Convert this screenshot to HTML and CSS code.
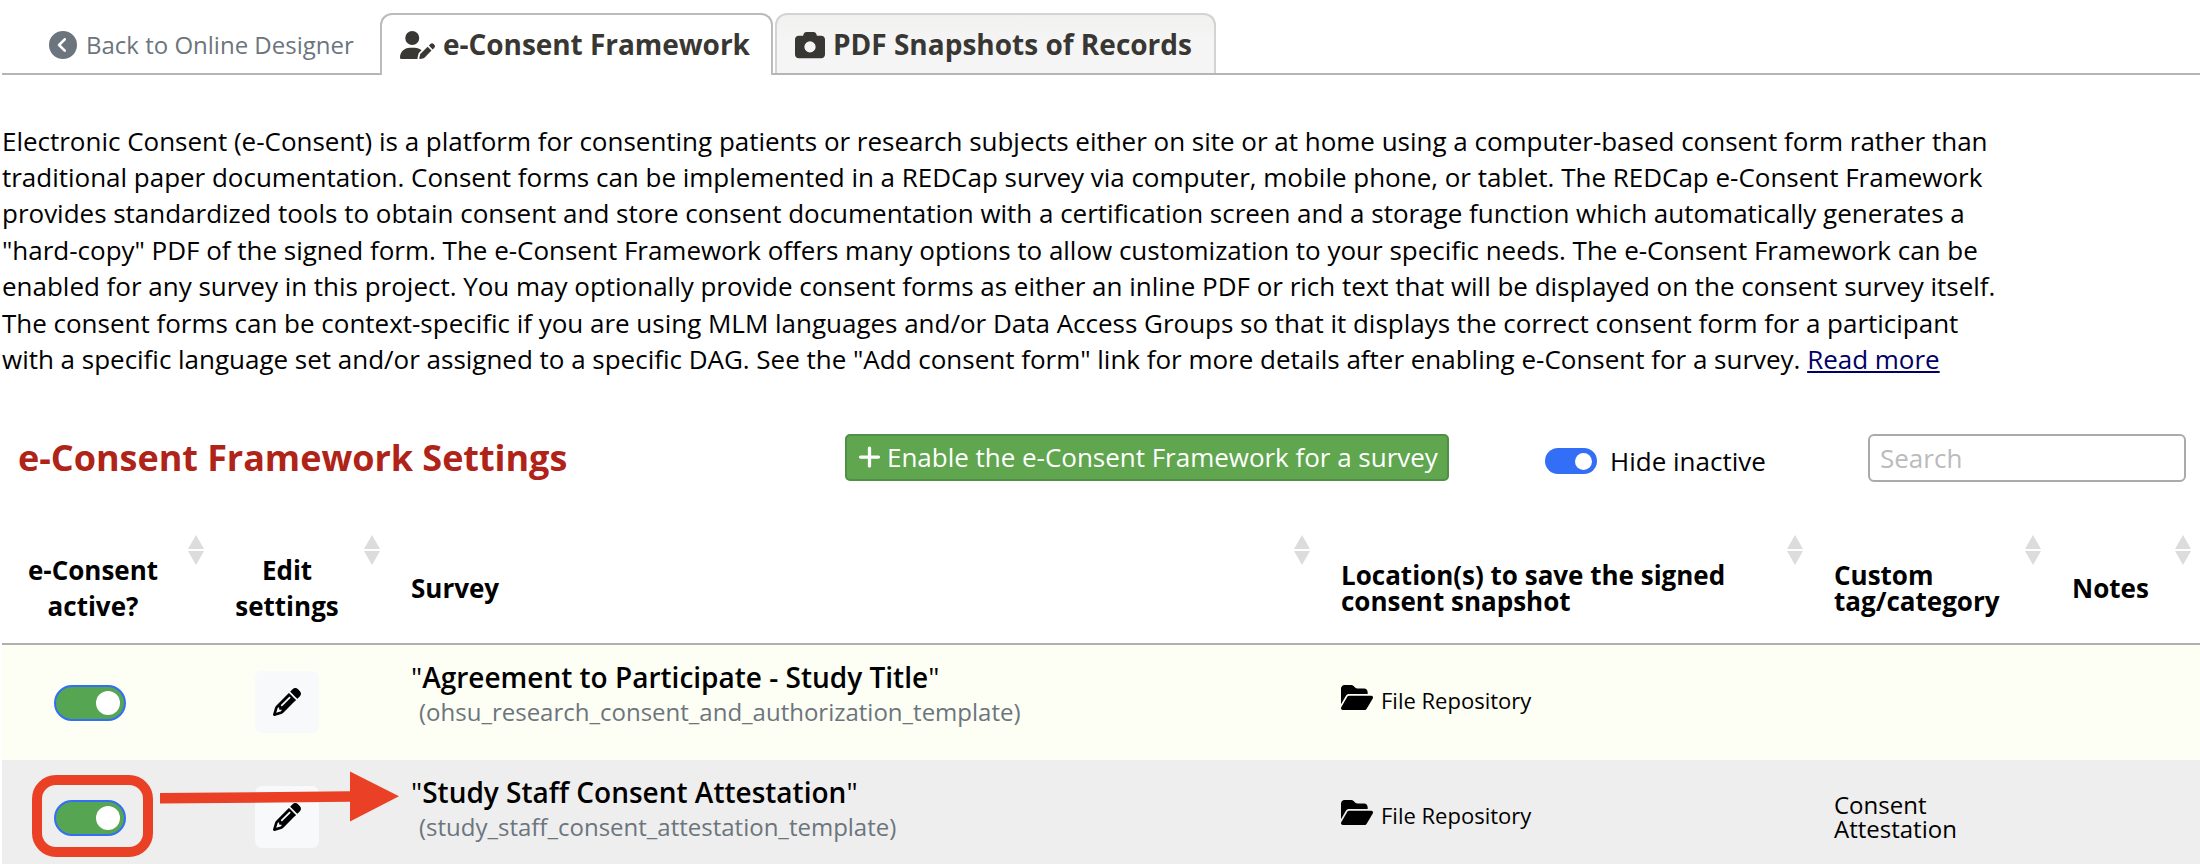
FILE: index.html
```html
<!DOCTYPE html>
<html lang="en">

<head>
    <meta charset="UTF-8">
    <meta name="viewport" content="width=device-width, initial-scale=1.0">
    <title>e-Consent Framework</title>
    <link rel="stylesheet" href="styles.css">
</head>

<body>
    <svg class="symbols">
        <symbol id="chevron" viewBox="0 0 512 512"><path d="M512 256A256 256 0 1 0 0 256a256 256 0 1 0 512 0zM271 135c9.4-9.4 24.6-9.4 33.9 0s9.4 24.6 0 33.9l-87 87 87 87c9.4 9.4 9.4 24.6 0 33.9s-24.6 9.4-33.9 0L167 273c-9.4-9.4-9.4-24.6 0-33.9L271 135z"/></symbol>
        <symbol id="user-pen" viewBox="0 0 640 512"><path d="M224 256A128 128 0 1 0 224 0a128 128 0 1 0 0 256zm-45.7 48C79.8 304 0 383.8 0 482.3C0 498.7 13.3 512 29.7 512H322.8c-3.1-8.8-3.7-18.4-1.4-27.8l15-60.1c2.8-11.3 8.6-21.5 16.8-29.7l40.3-40.3c-32.1-31-75.7-50.1-123.9-50.1H178.3zm435.5-68.3c-15.6-15.6-40.9-15.6-56.6 0l-29.4 29.4 71 71 29.4-29.4c15.6-15.6 15.6-40.9 0-56.6l-14.4-14.4zM375.9 417c-4.1 4.1-7 9.2-8.4 14.9l-15 60.1c-1.4 5.5 .2 11.2 4.2 15.2s9.7 5.6 15.2 4.2l60.1-15c5.6-1.4 10.8-4.3 14.9-8.4L576.1 358.7l-71-71L375.9 417z"/></symbol>
        <symbol id="camera" viewBox="0 0 512 512"><path d="M149.1 64.8L138.7 96H64C28.7 96 0 124.7 0 160V416c0 35.3 28.7 64 64 64H448c35.3 0 64-28.7 64-64V160c0-35.3-28.7-64-64-64H373.3L362.9 64.8C356.4 45.2 338.1 32 317.4 32H194.6c-20.7 0-39 13.2-45.5 32.8zM256 192a96 96 0 1 1 0 192 96 96 0 1 1 0-192z"/></symbol>
        <symbol id="plus" viewBox="0 0 448 512"><path d="M256 80c0-17.7-14.3-32-32-32s-32 14.3-32 32V224H48c-17.7 0-32 14.3-32 32s14.3 32 32 32H192V432c0 17.7 14.3 32 32 32s32-14.3 32-32V288H400c17.7 0 32-14.3 32-32s-14.3-32-32-32H256V80z"/></symbol>
        <symbol id="folder" viewBox="0 0 576 512"><path d="M88.7 223.8L0 375.8V96C0 60.7 28.7 32 64 32H181.5c17 0 33.3 6.7 45.3 18.7l26.5 26.5c12 12 28.3 18.7 45.3 18.7H416c35.3 0 64 28.7 64 64v32H144c-22.8 0-43.8 12.1-55.3 31.8zm27.6 16.1C122.1 230 132.6 224 144 224H544c11.5 0 22 6.1 27.7 16.1s5.7 22.2-.1 32.1l-112 192C453.9 474 443.4 480 432 480H32c-11.5 0-22-6.1-27.7-16.1s-5.7-22.2 .1-32.1l112-192z"/></symbol>
        <symbol id="pencil" viewBox="0 0 512 512"><path d="M410.3 231l11.3-11.3-33.9-33.9-62.1-62.1L291.7 89.8l-11.3 11.3-22.6 22.6L58.6 322.9c-10.4 10.4-18 23.3-22.2 37.4L1 480.7c-2.5 8.4-.2 17.5 6.1 23.7s15.3 8.5 23.7 6.1l120.3-35.4c14.1-4.2 27-11.8 37.4-22.2L387.7 253.7 410.3 231zM160 399.4l-9.1 22.7c-4 3.1-8.5 5.4-13.3 6.9L59.4 452l23-78.1c1.4-4.9 3.8-9.4 6.9-13.3l22.7-9.1v32c0 8.8 7.2 16 16 16h32zM362.7 18.7L348.3 33.2 325.7 55.8 314.3 67.1l33.9 33.9 62.1 62.1 33.9 33.9 11.3-11.3 22.6-22.6 14.5-14.5c25-25 25-65.5 0-90.5L453.3 18.7c-25-25-65.5-25-90.5 0zm-47.4 168l-144 144c-6.2 6.2-16.4 6.2-22.6 0s-6.2-16.4 0-22.6l144-144c6.2-6.2 16.4-6.2 22.6 0s6.2 16.4 0 22.6z"/></symbol>
        <symbol id="sort" viewBox="0 0 16 30"><path d="M8 0L16 14H0zM0 16H16L8 30z"/></symbol>
    </svg>

    <div class="tabs">
        <a class="back"><svg class="icon-back"><use href="#chevron"/></svg>Back to Online Designer</a>
        <a class="tab active"><svg class="icon-user"><use href="#user-pen"/></svg>e-Consent Framework</a>
        <a class="tab"><svg class="icon-camera"><use href="#camera"/></svg>PDF Snapshots of Records</a>
    </div>

    <p class="intro">Electronic Consent (e-Consent) is a platform for consenting patients or research subjects either on site or at home using a computer-based consent form rather than traditional paper documentation. Consent forms can be implemented in a REDCap survey via computer, mobile phone, or tablet. The REDCap e-Consent Framework provides standardized tools to obtain consent and store consent documentation with a certification screen and a storage function which automatically generates a "hard-copy" PDF of the signed form. The e-Consent Framework offers many options to allow customization to your specific needs. The e-Consent Framework can be enabled for any survey in this project. You may optionally provide consent forms as either an inline PDF or rich text that will be displayed on the consent survey itself. The consent forms can be context-specific if you are using MLM languages and/or Data Access Groups so that it displays the correct consent form for a participant with a specific language set and/or assigned to a specific DAG. See the "Add consent form" link for more details after enabling e-Consent for a survey. <a class="more">Read more</a></p>

    <div class="toolbar">
        <h1 class="title">e-Consent Framework Settings</h1>
        <button class="enable"><svg class="icon-plus"><use href="#plus"/></svg>Enable the e-Consent Framework for a survey</button>
        <label class="hide"><span class="switch"></span>Hide inactive</label>
        <input class="search" type="text" placeholder="Search">
    </div>

    <table class="list">
        <colgroup>
            <col class="col-active">
            <col class="col-edit">
            <col class="col-survey">
            <col class="col-location">
            <col class="col-tag">
            <col class="col-notes">
            <col>
        </colgroup>
        <thead>
            <tr>
                <th class="center">e-Consent<br>active?<svg class="sort"><use href="#sort"/></svg></th>
                <th class="center edit">Edit<br>settings<svg class="sort"><use href="#sort"/></svg></th>
                <th>Survey<svg class="sort"><use href="#sort"/></svg></th>
                <th class="tight">Location(s) to save the signed<br>consent snapshot<svg class="sort"><use href="#sort"/></svg></th>
                <th class="tight">Custom<br>tag/category<svg class="sort"><use href="#sort"/></svg></th>
                <th>Notes<svg class="sort"><use href="#sort"/></svg></th>
                <th></th>
            </tr>
        </thead>
        <tbody>
            <tr class="odd">
                <td class="toggle-cell"><span class="toggle"></span></td>
                <td class="edit-cell"><span class="edit-btn"><svg class="icon-pencil"><use href="#pencil"/></svg></span></td>
                <td class="survey">
                    <div class="name">"<b>Agreement to Participate - Study Title</b>"</div>
                    <div class="form">(ohsu_research_consent_and_authorization_template)</div>
                </td>
                <td><div class="repo"><svg class="icon-folder"><use href="#folder"/></svg>File Repository</div></td>
                <td></td>
                <td></td>
                <td></td>
            </tr>
            <tr class="even">
                <td class="toggle-cell">
                    <span class="toggle"></span>
                    <span class="mark"></span>
                    <svg class="arrow" viewBox="0 0 240 52"><path d="M0 22L190 20.3V0.5L239 25.3L190 50.5V30.8L0 32.5z"/></svg>
                </td>
                <td class="edit-cell"><span class="edit-btn"><svg class="icon-pencil"><use href="#pencil"/></svg></span></td>
                <td class="survey">
                    <div class="name">"<b>Study Staff Consent Attestation</b>"</div>
                    <div class="form">(study_staff_consent_attestation_template)</div>
                </td>
                <td><div class="repo"><svg class="icon-folder"><use href="#folder"/></svg>File Repository</div></td>
                <td class="tag">Consent<br>Attestation</td>
                <td></td>
                <td></td>
            </tr>
        </tbody>
    </table>
</body>

</html>
```
FILE: styles.css
```css
* {
    margin: 0;
    padding: 0;
    box-sizing: border-box;
}

body {
    font-family: 'Open Sans', sans-serif;
    font-size: 26px;
    line-height: 36.4px;
    color: #000;
    background: #fff;
    height: 864px;
    padding-left: 2px;
    overflow: hidden;
}

svg {
    fill: currentColor;
    flex: none;
}

.symbols {
    display: none;
}

/* tabs */
.tabs {
    display: flex;
    height: 75px;
    padding-top: 13px;
    background: linear-gradient(#b5b5b5, #b5b5b5) bottom / 100% 2px no-repeat;
}

.back {
    display: flex;
    align-items: center;
    width: 378px;
    padding: 3px 0 0 47px;
    font-size: 24px;
    color: #6c757d;
    white-space: nowrap;
}

.tab {
    display: flex;
    align-items: center;
    width: 441px;
    height: 60px;
    padding: 1px 0 0 18px;
    border: 2px solid #d3d3d3;
    border-bottom: none;
    border-radius: 12px 12px 0 0;
    background: linear-gradient(#f1f1f0, #f5f5f5 50%);
    font-size: 28px;
    font-weight: bold;
    color: #393733;
    white-space: nowrap;
}

.tab.active {
    width: 393px;
    height: 62px;
    margin-right: 2px;
    padding-bottom: 2px;
    border-color: #bbb;
    background: #fff;
    letter-spacing: -0.05px;
}

.icon-back {
    width: 28px;
    height: 28px;
    margin: -2px 9px 0 0;
}

.icon-user {
    width: 35px;
    height: 28px;
    margin-right: 8px;
}

.icon-camera {
    width: 30px;
    height: 30px;
    margin-right: 8px;
}

/* intro text */
.intro {
    width: 2000px;
    margin-top: 47.6px;
    letter-spacing: -0.015px;
}

.more {
    color: #000066;
    text-decoration: underline;
}

/* toolbar */
.toolbar {
    display: flex;
    height: 48px;
    margin-top: 56.6px;
}

.title {
    width: 843px;
    padding-left: 16px;
    font-size: 36px;
    line-height: 48px;
    letter-spacing: -0.04px;
    color: #b02318;
}

.enable {
    display: flex;
    align-items: center;
    width: 604px;
    height: 47px;
    padding: 0 0 1px 11px;
    border: 2px solid #4f8f46;
    border-radius: 5px;
    background: #5fa64f;
    color: #fff;
    font: 26px 'Open Sans', sans-serif;
    letter-spacing: -0.02px;
    white-space: nowrap;
}

.icon-plus {
    width: 23px;
    height: 26px;
    margin-right: 6px;
}

.hide {
    display: flex;
    align-items: center;
    width: 419px;
    padding: 6px 0 0 96px;
    white-space: nowrap;
}

.switch {
    display: flex;
    align-items: center;
    justify-content: flex-end;
    width: 52px;
    height: 26px;
    margin-right: 13px;
    padding-right: 5px;
    border-radius: 13px;
    background: #326ef6;
}

.switch::after {
    content: "";
    width: 17px;
    height: 17px;
    border-radius: 50%;
    background: #fff;
}

.search {
    width: 318px;
    height: 48px;
    padding: 0 0 0 10px;
    border: 2px solid #aaa;
    border-radius: 6px;
    font: 26px 'Open Sans', sans-serif;
}

.search::placeholder {
    color: #bbb;
}

/* table */
.list {
    width: 2198px;
    margin-top: 37px;
    table-layout: fixed;
    border-collapse: separate;
    border-spacing: 0;
}

.col-active { width: 204px; }
.col-edit { width: 176px; }
.col-survey { width: 930px; }
.col-location { width: 493px; }
.col-tag { width: 238px; }
.col-notes { width: 150px; }

th {
    position: relative;
    height: 126px;
    padding: 14px 0 0 29px;
    border-bottom: 2px solid #b0b0b0;
    text-align: left;
    white-space: nowrap;
}

.center {
    padding: 14px 22px 0 0;
    text-align: center;
}

.edit {
    padding-right: 14px;
}

.tight {
    line-height: 26px;
}

.sort {
    position: absolute;
    top: 16px;
    right: 2px;
    width: 16px;
    height: 30px;
    color: #dcdcdc;
}

td {
    position: relative;
    height: 115px;
    padding-left: 29px;
    vertical-align: top;
}

.odd {
    background: #fdfef4;
}

.even {
    background: #eee;
}

.toggle-cell {
    padding: 40px 0 0 52px;
}

.toggle {
    display: flex;
    align-items: center;
    justify-content: flex-end;
    width: 72px;
    height: 36px;
    padding-right: 4px;
    border: 2px solid #326ef6;
    border-radius: 18px;
    background: #55a553;
}

.toggle::after {
    content: "";
    width: 24px;
    height: 24px;
    border-radius: 50%;
    background: #fff;
}

.edit-cell {
    padding: 26px 0 0 49px;
}

.edit-btn {
    display: flex;
    align-items: center;
    justify-content: center;
    width: 64px;
    height: 62px;
    border-radius: 7px;
    background: #f8f9fb;
}

.icon-pencil {
    width: 28px;
    height: 28px;
}

.survey {
    padding-top: 14px;
    white-space: nowrap;
}

.name {
    font-size: 28px;
    line-height: 36px;
}

.name b {
    font-weight: 600;
}

.form {
    padding-left: 8px;
    font-size: 24px;
    line-height: 33px;
    color: #6c757d;
}

.repo {
    display: flex;
    padding-top: 38px;
    font-size: 22px;
    line-height: 34px;
    white-space: nowrap;
}

.icon-folder {
    width: 32px;
    height: 29px;
    margin-right: 8px;
}

.tag {
    padding-top: 33px;
    font-size: 24px;
    line-height: 24px;
}

/* highlight around the second toggle */
.mark {
    position: absolute;
    left: 30px;
    top: 15px;
    width: 121px;
    height: 82px;
    border: 10px solid #ea4025;
    border-radius: 24px;
}

.arrow {
    position: absolute;
    left: 158px;
    top: 11px;
    z-index: 1;
    width: 240px;
    height: 52px;
    color: #ea4025;
}
```
